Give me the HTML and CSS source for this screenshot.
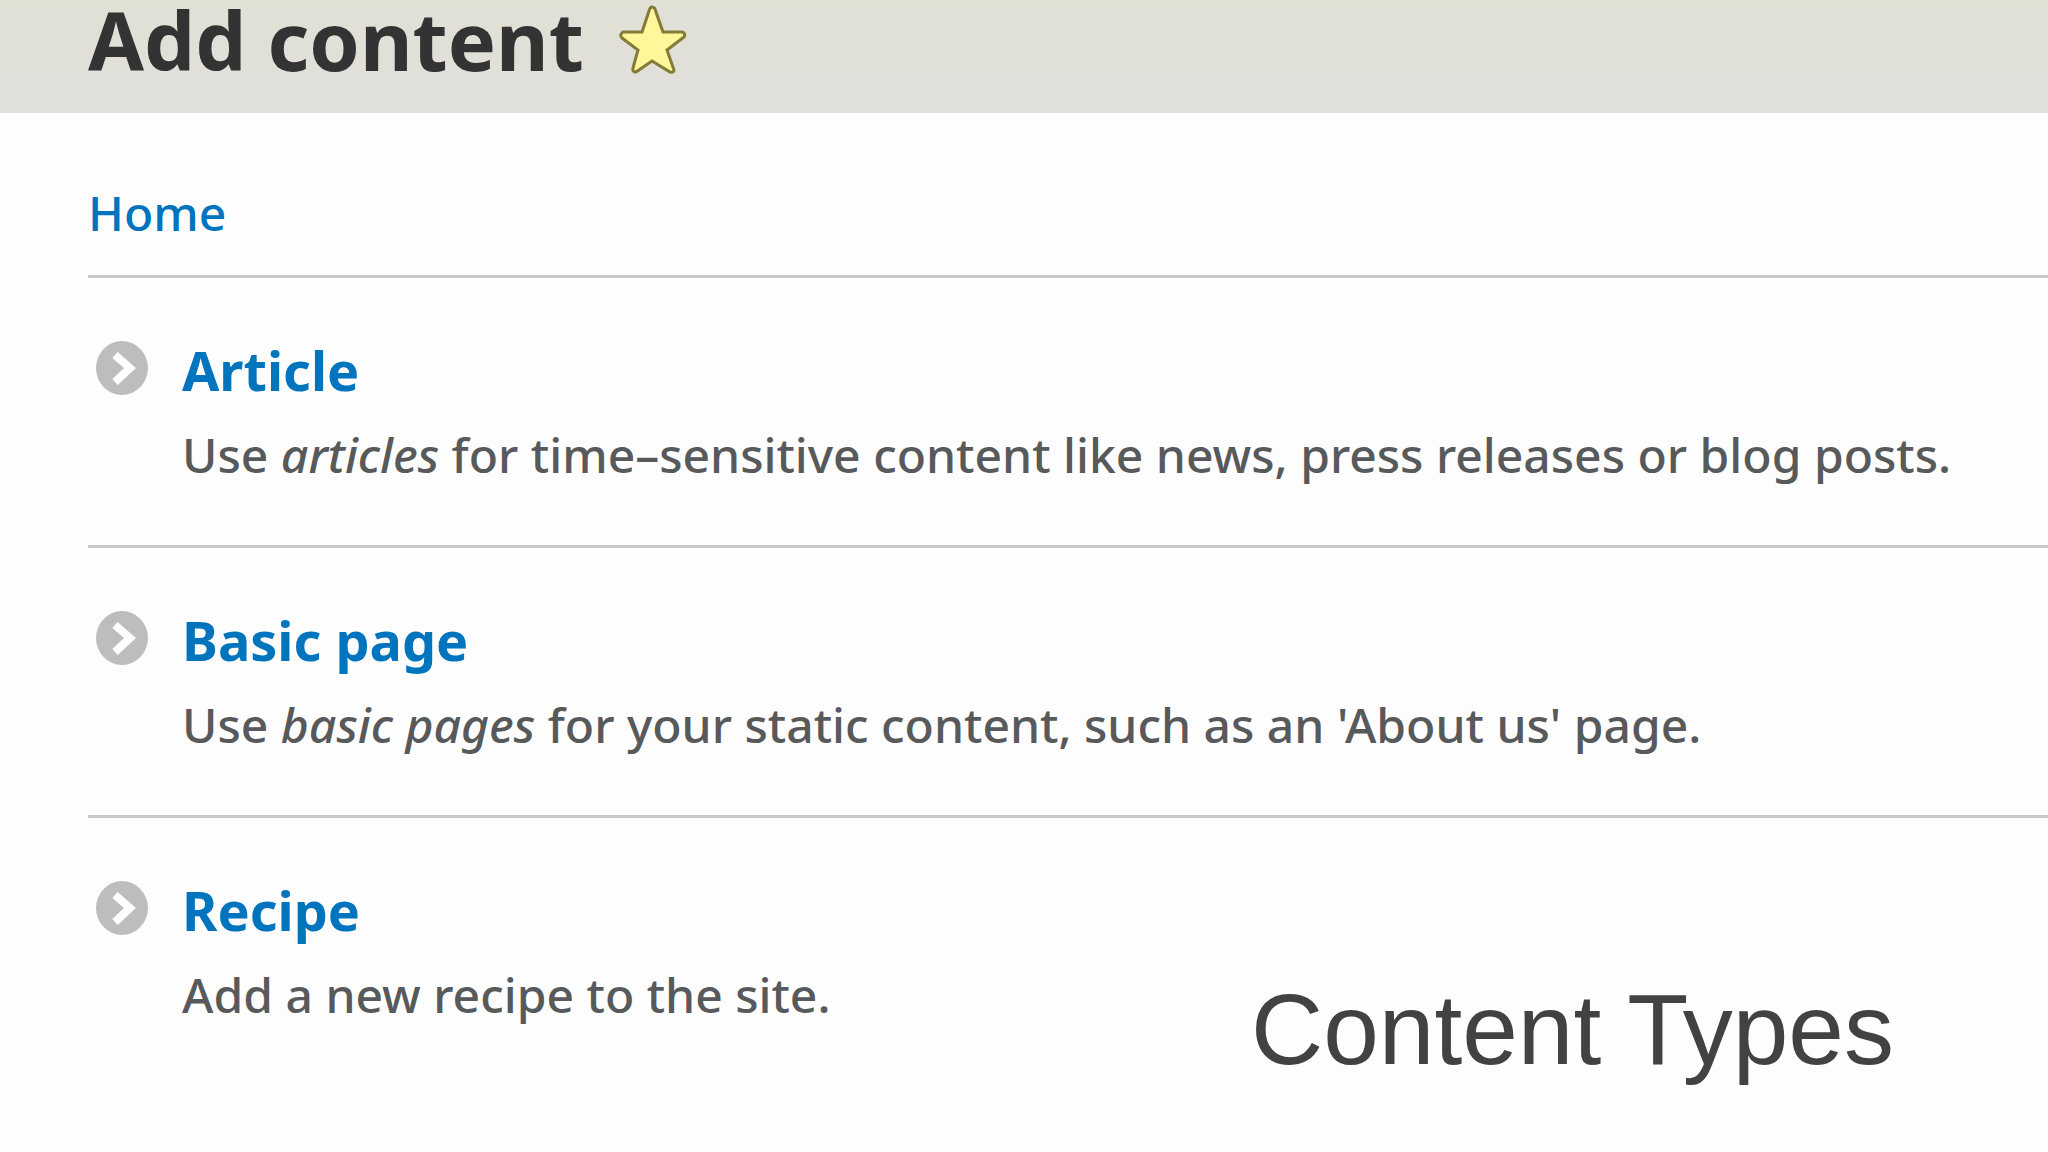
FILE: index.html
```html
<!DOCTYPE html>
<html lang="en">
<head>
    <meta charset="UTF-8">
    <meta name="viewport" content="width=device-width, initial-scale=1.0">
    <title>Add content</title>
    <link rel="stylesheet" href="styles.css">
</head>
<body>
    <header class="branding">
        <h1 class="page-title">Add content</h1>
        <a href="#" class="add-shortcut" aria-label="Add to shortcuts">
            <svg class="star" viewBox="0 0 70 70" aria-hidden="true">
                <path d="M34 3Q37 3 38 8L45 28L64 28Q68 29 66 33L49 46L56 66Q56 69 52 68L34 57L18 68Q14 68 15 64L20 46L4 34Q1 31 5 28L24 28L31 7Q32 3 34 3Z"/>
            </svg>
        </a>
    </header>
    <main class="page">
        <nav class="breadcrumb">
            <a href="#">Home</a>
        </nav>
        <ul class="node-types">
            <li class="node-type">
                <svg class="bullet" viewBox="0 0 52 54" aria-hidden="true">
                    <ellipse cx="26" cy="27" rx="26" ry="27"/>
                    <path d="M19 14L34 27L19 41"/>
                </svg>
                <div class="node-text">
                    <h2><a href="#">Article</a></h2>
                    <p>Use <em>articles</em> for time–sensitive content like news, press releases or blog posts.</p>
                </div>
            </li>
            <li class="node-type">
                <svg class="bullet" viewBox="0 0 52 54" aria-hidden="true">
                    <ellipse cx="26" cy="27" rx="26" ry="27"/>
                    <path d="M19 14L34 27L19 41"/>
                </svg>
                <div class="node-text">
                    <h2><a href="#">Basic page</a></h2>
                    <p>Use <em>basic pages</em> for your static content, such as an 'About us' page.</p>
                </div>
            </li>
            <li class="node-type">
                <svg class="bullet" viewBox="0 0 52 54" aria-hidden="true">
                    <ellipse cx="26" cy="27" rx="26" ry="27"/>
                    <path d="M19 14L34 27L19 41"/>
                </svg>
                <div class="node-text">
                    <h2><a href="#">Recipe</a></h2>
                    <p>Add a new recipe to the site.</p>
                </div>
            </li>
        </ul>
    </main>
    <p class="caption">Content Types</p>
</body>
</html>
```
FILE: styles.css
```css
/* General Styles */
* {
    box-sizing: border-box;
}

body {
    font-family: "Noto Sans", sans-serif;
    font-size: 48px;
    font-weight: 500;
    line-height: 64px;
    margin: 0;
    color: #58595b;
    background-color: #fdfdfd;
}

h1, h2, p, ul {
    margin: 0;
    padding: 0;
}

a {
    color: #0074bd;
    text-decoration: none;
}

/* Header */
.branding {
    display: flex;
    align-items: flex-start;
    gap: 34px;
    padding: 0 88px 33px;
    background: linear-gradient(to bottom, #e1e0d5, #e1dfdb);
}

.page-title {
    font-size: 81px;
    line-height: 80px;
    color: #333;
}

.add-shortcut {
    display: flex;
    padding-top: 4px;
}

.star {
    width: 70px;
    height: 70px;
    fill: #fff799;
    stroke: #837b38;
    stroke-width: 3px;
}

/* Breadcrumb and list */
.page {
    padding-left: 88px;
}

.breadcrumb {
    padding: 68px 0 30px;
}

.node-types {
    list-style: none;
}

.node-type {
    display: flex;
    gap: 34px;
    padding: 60px 0 58px 8px;
    border-top: 3px solid #c8c7c9;
}

.bullet {
    flex: none;
    width: 52px;
    height: 54px;
    margin-top: 3px;
}

.bullet ellipse {
    fill: #bfbcbf;
}

.bullet path {
    fill: none;
    stroke: white;
    stroke-width: 8px;
}

.node-text h2 {
    font-size: 54px;
    line-height: 64px;
    margin-bottom: 21px;
}

/* Slide caption, laid over the page */
.caption {
    position: absolute;
    right: 154px;
    bottom: 67px;
    font-family: "Liberation Sans", Arial, sans-serif;
    font-size: 100px;
    font-weight: normal;
    line-height: 112px;
    color: #434144;
}
```
